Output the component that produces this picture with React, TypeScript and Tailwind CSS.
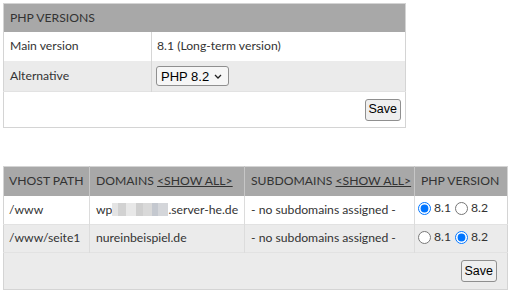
import React from 'react';

const font = { fontFamily: 'Lato, "Open Sans", sans-serif' };
const uiFont = { fontFamily: '"Liberation Sans", Arial, sans-serif' };

const SaveButton = () => (
  <button
    type="button"
    className="h-[22px] px-[3px] border border-[#8f8f8f] rounded-[3px] bg-[#efefef] text-[12.5px] text-black leading-none"
    style={uiFont}
  >
    Save
  </button>
);

const Blurred = () => (
  <span className="inline-flex align-middle h-[13px] w-[56px] -mt-[2px]">
    <span className="w-[6px] bg-[#e4e4e4]" />
    <span className="w-[8px] bg-[#d2d2d2]" />
    <span className="w-[10px] bg-[#e8e8e8]" />
    <span className="w-[7px] bg-[#cfcfcf]" />
    <span className="w-[9px] bg-[#d9d9d9]" />
    <span className="w-[6px] bg-[#c4c8cf]" />
    <span className="w-[10px] bg-[#d4d6da]" />
  </span>
);

const sites = [
  { path: '/www', domain: 'blur', version: '8.1' },
  { path: '/www/seite1', domain: 'nureinbeispiel.de', version: '8.2' },
];

export default function App() {
  return (
    <div className="p-[3px] text-[12.2px] text-[#333]" style={font}>
      <table className="w-[403px] table-fixed border-collapse border border-[#d4d4d4]">
        <colgroup>
          <col className="w-[148px]" />
          <col />
        </colgroup>
        <thead>
          <tr className="h-[28px] bg-[#a8a8a8]">
            <th colSpan={2} className="px-[6px] text-left font-normal">PHP VERSIONS</th>
          </tr>
        </thead>
        <tbody>
          <tr className="h-[29px] bg-white">
            <td className="px-[6px] border-r border-[#d6d6d6]">Main version</td>
            <td className="px-[5px]">8.1 (Long-term version)</td>
          </tr>
          <tr className="h-[31px] bg-[#ebebeb]">
            <td className="px-[6px] border-r border-[#d6d6d6]">Alternative</td>
            <td className="px-[4px]">
              <div className="relative inline-flex items-center align-middle">
                <select
                  defaultValue="8.2"
                  className="appearance-none w-[73px] h-[20px] pl-[4px] border border-[#8f8f8f] rounded-[3px] bg-[#f6f6f6] text-[13px] text-black"
                  style={uiFont}
                >
                  <option value="8.1">PHP 8.1</option>
                  <option value="8.2">PHP 8.2</option>
                </select>
                <svg className="pointer-events-none absolute right-[7px] top-[8px]" width="8" height="5" viewBox="0 0 8 5">
                  <polyline points="1,1 4,4 7,1" fill="none" stroke="#222" strokeWidth="1.3" />
                </svg>
              </div>
            </td>
          </tr>
          <tr className="h-[36px] bg-white border-t border-[#e2e2e2]">
            <td colSpan={2} className="px-[4px] text-right">
              <SaveButton />
            </td>
          </tr>
        </tbody>
      </table>

      <table className="mt-[38px] w-[505px] table-fixed border-collapse border border-[#d4d4d4]">
        <colgroup>
          <col className="w-[86px]" />
          <col className="w-[155px]" />
          <col className="w-[170px]" />
          <col />
        </colgroup>
        <thead>
          <tr className="h-[29px] bg-[#a8a8a8] text-left whitespace-nowrap">
            <th className="px-[5px] font-normal border-r border-[#c6c6c6]">VHOST PATH</th>
            <th className="px-[6px] font-normal border-r border-[#c6c6c6]">
              DOMAINS <span className="underline">&lt;SHOW ALL&gt;</span>
            </th>
            <th className="px-[6px] font-normal border-r border-[#c6c6c6]">
              SUBDOMAINS <span className="underline">&lt;SHOW ALL&gt;</span>
            </th>
            <th className="px-[6px] font-normal">PHP VERSION</th>
          </tr>
        </thead>
        <tbody>
          {sites.map((s, i) => (
            <tr key={s.path} className={i % 2 === 0 ? 'h-[29px] bg-white' : 'h-[28px] bg-[#ebebeb] border-t border-[#e2e2e2]'}>
              <td className="px-[5px] border-r border-[#dcdcdc] whitespace-nowrap">{s.path}</td>
              <td className="px-[6px] border-r border-[#dcdcdc] whitespace-nowrap">
                {s.domain === 'blur' ? (
                  <>
                    wp<Blurred />.server-he.de
                  </>
                ) : (
                  s.domain
                )}
              </td>
              <td className="px-[6px] border-r border-[#dcdcdc] whitespace-nowrap">- no subdomains assigned -</td>
              <td className="px-[3px] whitespace-nowrap">
                <label className="inline-flex items-center gap-[3px]">
                  <input type="radio" name={`v${i}`} defaultChecked={s.version === '8.1'} className="m-0 w-[13px] h-[13px] accent-[#0075ff]" />
                  8.1
                </label>
                <label className="inline-flex items-center gap-[3px] ml-[4px]">
                  <input type="radio" name={`v${i}`} defaultChecked={s.version === '8.2'} className="m-0 w-[13px] h-[13px] accent-[#0075ff]" />
                  8.2
                </label>
              </td>
            </tr>
          ))}
          <tr className="h-[37px] bg-[#ebebeb] border-t border-[#e2e2e2]">
            <td colSpan={4} className="px-[10px] text-right">
              <SaveButton />
            </td>
          </tr>
        </tbody>
      </table>
    </div>
  );
}
